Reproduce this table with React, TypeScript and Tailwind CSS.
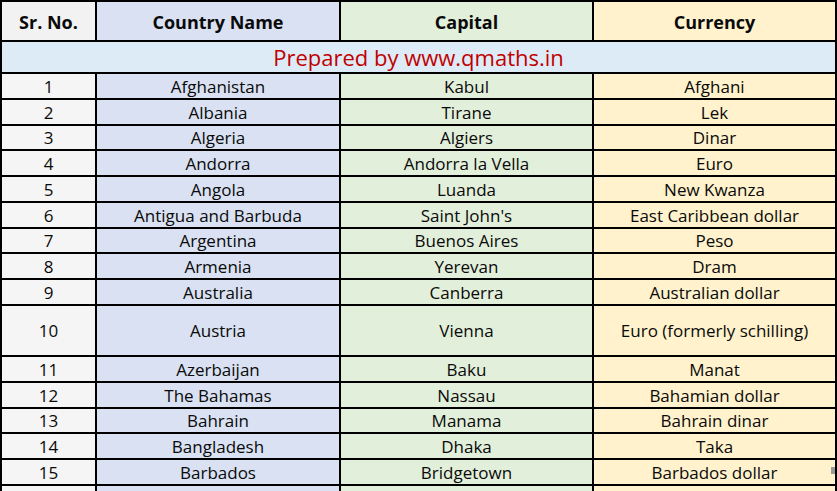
import React from 'react';

type Row = { no: number; country: string; capital: string; currency: string; h: string };

const rows: Row[] = [
  { no: 1, country: 'Afghanistan', capital: 'Kabul', currency: 'Afghani', h: 'h-[26px]' },
  { no: 2, country: 'Albania', capital: 'Tirane', currency: 'Lek', h: 'h-[26px]' },
  { no: 3, country: 'Algeria', capital: 'Algiers', currency: 'Dinar', h: 'h-[25px]' },
  { no: 4, country: 'Andorra', capital: 'Andorra la Vella', currency: 'Euro', h: 'h-[26px]' },
  { no: 5, country: 'Angola', capital: 'Luanda', currency: 'New Kwanza', h: 'h-[26px]' },
  { no: 6, country: 'Antigua and Barbuda', capital: "Saint John's", currency: 'East Caribbean dollar', h: 'h-[26px]' },
  { no: 7, country: 'Argentina', capital: 'Buenos Aires', currency: 'Peso', h: 'h-[25px]' },
  { no: 8, country: 'Armenia', capital: 'Yerevan', currency: 'Dram', h: 'h-[26px]' },
  { no: 9, country: 'Australia', capital: 'Canberra', currency: 'Australian dollar', h: 'h-[26px]' },
  { no: 10, country: 'Austria', capital: 'Vienna', currency: 'Euro (formerly schilling)', h: 'h-[51px]' },
  { no: 11, country: 'Azerbaijan', capital: 'Baku', currency: 'Manat', h: 'h-[26px]' },
  { no: 12, country: 'The Bahamas', capital: 'Nassau', currency: 'Bahamian dollar', h: 'h-[26px]' },
  { no: 13, country: 'Bahrain', capital: 'Manama', currency: 'Bahrain dinar', h: 'h-[25px]' },
  { no: 14, country: 'Bangladesh', capital: 'Dhaka', currency: 'Taka', h: 'h-[26px]' },
  { no: 15, country: 'Barbados', capital: 'Bridgetown', currency: 'Barbados dollar', h: 'h-[26px]' },
];

const cols = 'grid grid-cols-[95px_244px_253px_243px] grid-rows-[100%]';
const cell = 'flex items-center justify-center pt-[1px] border-r-2 border-b-2 border-black overflow-hidden';

export default function App() {
  return (
    <div
      className="w-[837px] h-[491px] overflow-hidden bg-white text-[#0a0a0a] text-[17px] leading-[20px]"
      style={{ fontFamily: '"Open Sans", "Liberation Sans", sans-serif' }}
    >
      <div className="border-l-2 border-t-2 border-black">
        {/* header */}
        <div className={`${cols} h-[40px] font-bold text-[18px]`}>
          <div className={`${cell} bg-[#f2f2f2]`}>Sr. No.</div>
          <div className={`${cell} bg-[#d9e1f2]`}>Country Name</div>
          <div className={`${cell} bg-[#e2efda]`}>Capital</div>
          <div className={`${cell} bg-[#fff2cc]`}>Currency</div>
        </div>

        <div className="h-[32px] flex items-center justify-center border-r-2 border-b-2 border-black bg-[#ddebf7] text-[#c00000] text-[22px]">
          Prepared by www.qmaths.in
        </div>

        {rows.map((r) => (
          <div key={r.no} className={`${cols} ${r.h}`}>
            <div className={`${cell} bg-[#f5f5f5]`}>{r.no}</div>
            <div className={`${cell} bg-[#d9e1f2]`}>{r.country}</div>
            <div className={`${cell} bg-[#e2efda]`}>{r.capital}</div>
            <div className={`${cell} bg-[#fff2cc] relative`}>
              {r.currency}
              {r.no === 15 && (
                <span className="absolute right-0 top-[7px] w-[4px] h-[7px] bg-[#9a9a9a]" />
              )}
            </div>
          </div>
        ))}

        <div className={`${cols} h-[26px]`}>
          <div className={`${cell} bg-[#f5f5f5]`}></div>
          <div className={`${cell} bg-[#d9e1f2]`}></div>
          <div className={`${cell} bg-[#e2efda]`}></div>
          <div className={`${cell} bg-[#fff2cc]`}></div>
        </div>
      </div>
    </div>
  );
}
